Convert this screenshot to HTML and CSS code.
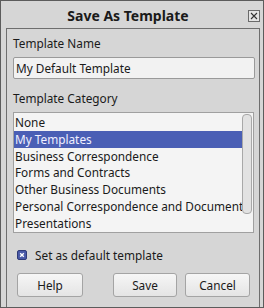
FILE: index.html
```html
<!DOCTYPE html>
<html lang="en">
<head>
  <meta charset="UTF-8" />
  <meta name="viewport" content="width=device-width, initial-scale=1.0" />
  <link rel="stylesheet" href="styles.css">
</head>
<body>
  <div class="window">
    <div class="titlebar">
      <span class="title">Save As Template</span>
      <span class="close">
        <svg width="12" height="12" viewBox="0 0 12 12">
          <rect x="0.5" y="0.5" width="11" height="11" fill="#e4e4e4" stroke="#6a6a6a"/>
          <path d="M3 3 L9 9 M9 3 L3 9" stroke="#333" stroke-width="1.1"/>
        </svg>
      </span>
    </div>
    <div class="frame">
      <div class="caption">Template Name</div>
      <div class="field">My Default Template</div>
      <div class="caption second">Template Category</div>
      <div class="listbox">
        <ul class="items">
          <li>None</li>
          <li class="selected">My Templates</li>
          <li>Business Correspondence</li>
          <li>Forms and Contracts</li>
          <li>Other Business Documents</li>
          <li>Personal Correspondence and Documents</li>
          <li>Presentations</li>
        </ul>
        <div class="scrollbar"><div class="thumb"></div></div>
      </div>
      <div class="check">
        <span class="box">
          <svg width="10" height="10" viewBox="0 0 10 10">
            <rect x="0.5" y="0.5" width="9" height="9" rx="1.5" fill="#4a5aa8" stroke="#2f3a78"/>
            <path d="M3.2 3.2 L6.8 6.8 M6.8 3.2 L3.2 6.8" stroke="#fff" stroke-width="1.4"/>
          </svg>
        </span>
        <span>Set as default template</span>
      </div>
      <div class="buttons">
        <button class="btn help">Help</button>
        <button class="btn save">Save</button>
        <button class="btn">Cancel</button>
      </div>
    </div>
  </div>
</body>
</html>
```

FILE: styles.css
```css
body {
  margin: 0;
  font-family: 'Noto Sans', 'Open Sans', sans-serif;
  font-size: 11.8px;
  color: #1a1a1a;
  overflow: hidden;
}
.window {
  box-sizing: border-box;
  width: 264px;
  height: 308px;
  border: 1px solid #5c5c5c;
  background-color: #d6d6d6;
  display: flex;
  flex-direction: column;
}
.titlebar {
  height: 27px;
  flex-shrink: 0;
  display: flex;
  align-items: center;
  justify-content: center;
  position: relative;
}
.title {
  font-weight: bold;
  font-size: 14px;
  margin-right: 8px;
  margin-top: 1px;
}
.close {
  position: absolute;
  right: 3px;
  top: 9px;
  display: flex;
}
.frame {
  flex: 1;
  margin: 0 3px 0 5px;
  border: 1px solid #6e6e6e;
  border-bottom: none;
  padding: 0 4px 0 6px;
}
.caption {
  height: 18px;
  line-height: 18px;
  margin-top: 5px;
  padding-left: 0;
}
.caption.second {
  margin-top: 10px;
}
.field {
  box-sizing: border-box;
  height: 22px;
  margin-top: 5px;
  border: 1px solid #9a9a9a;
  border-radius: 2px;
  background-color: #f2f2f2;
  padding-left: 2px;
  line-height: 20px;
}
.listbox {
  box-sizing: border-box;
  height: 121px;
  margin-top: 5px;
  margin-right: 1px;
  border: 1px solid #a0a0a0;
  background-color: #f4f4f4;
  display: flex;
  overflow: hidden;
}
.items {
  flex: 1;
  list-style: none;
  margin: 0;
  padding: 1px 0 0;
  overflow: hidden;
  white-space: nowrap;

  > li {
    height: 16.8px;
    line-height: 16.8px;
    padding-left: 1px;
  }

  > li.selected {
    background-color: #4a5fb5;
    color: #f0f0ff;
  }
}
.scrollbar {
  width: 10px;
  flex-shrink: 0;
  padding: 1px 1px 0 0;
}
.thumb {
  box-sizing: border-box;
  height: 100px;
  border: 1px solid #a8a8a8;
  border-radius: 4px;
  background-color: #e2e2e2;
}
.check {
  display: flex;
  align-items: center;
  margin-top: 16px;
  margin-left: 4px;
  height: 12px;

  > .box {
    display: flex;
    margin-right: 8px;
  }
}
.buttons {
  display: flex;
  margin-top: 12px;
  padding: 0 5px 0 4px;
}
.btn {
  box-sizing: border-box;
  height: 24px;
  width: 65px;
  border: 1px solid #a4a4a4;
  border-radius: 3px;
  background: linear-gradient(#f6f6f6, #e4e4e4);
  font-family: inherit;
  font-size: 11.8px;
  color: #1a1a1a;
  padding: 0;
}
.btn.help {
  width: 66px;
}
.btn.save {
  margin-left: auto;
  margin-right: 8px;
  width: 64px;
}
```
